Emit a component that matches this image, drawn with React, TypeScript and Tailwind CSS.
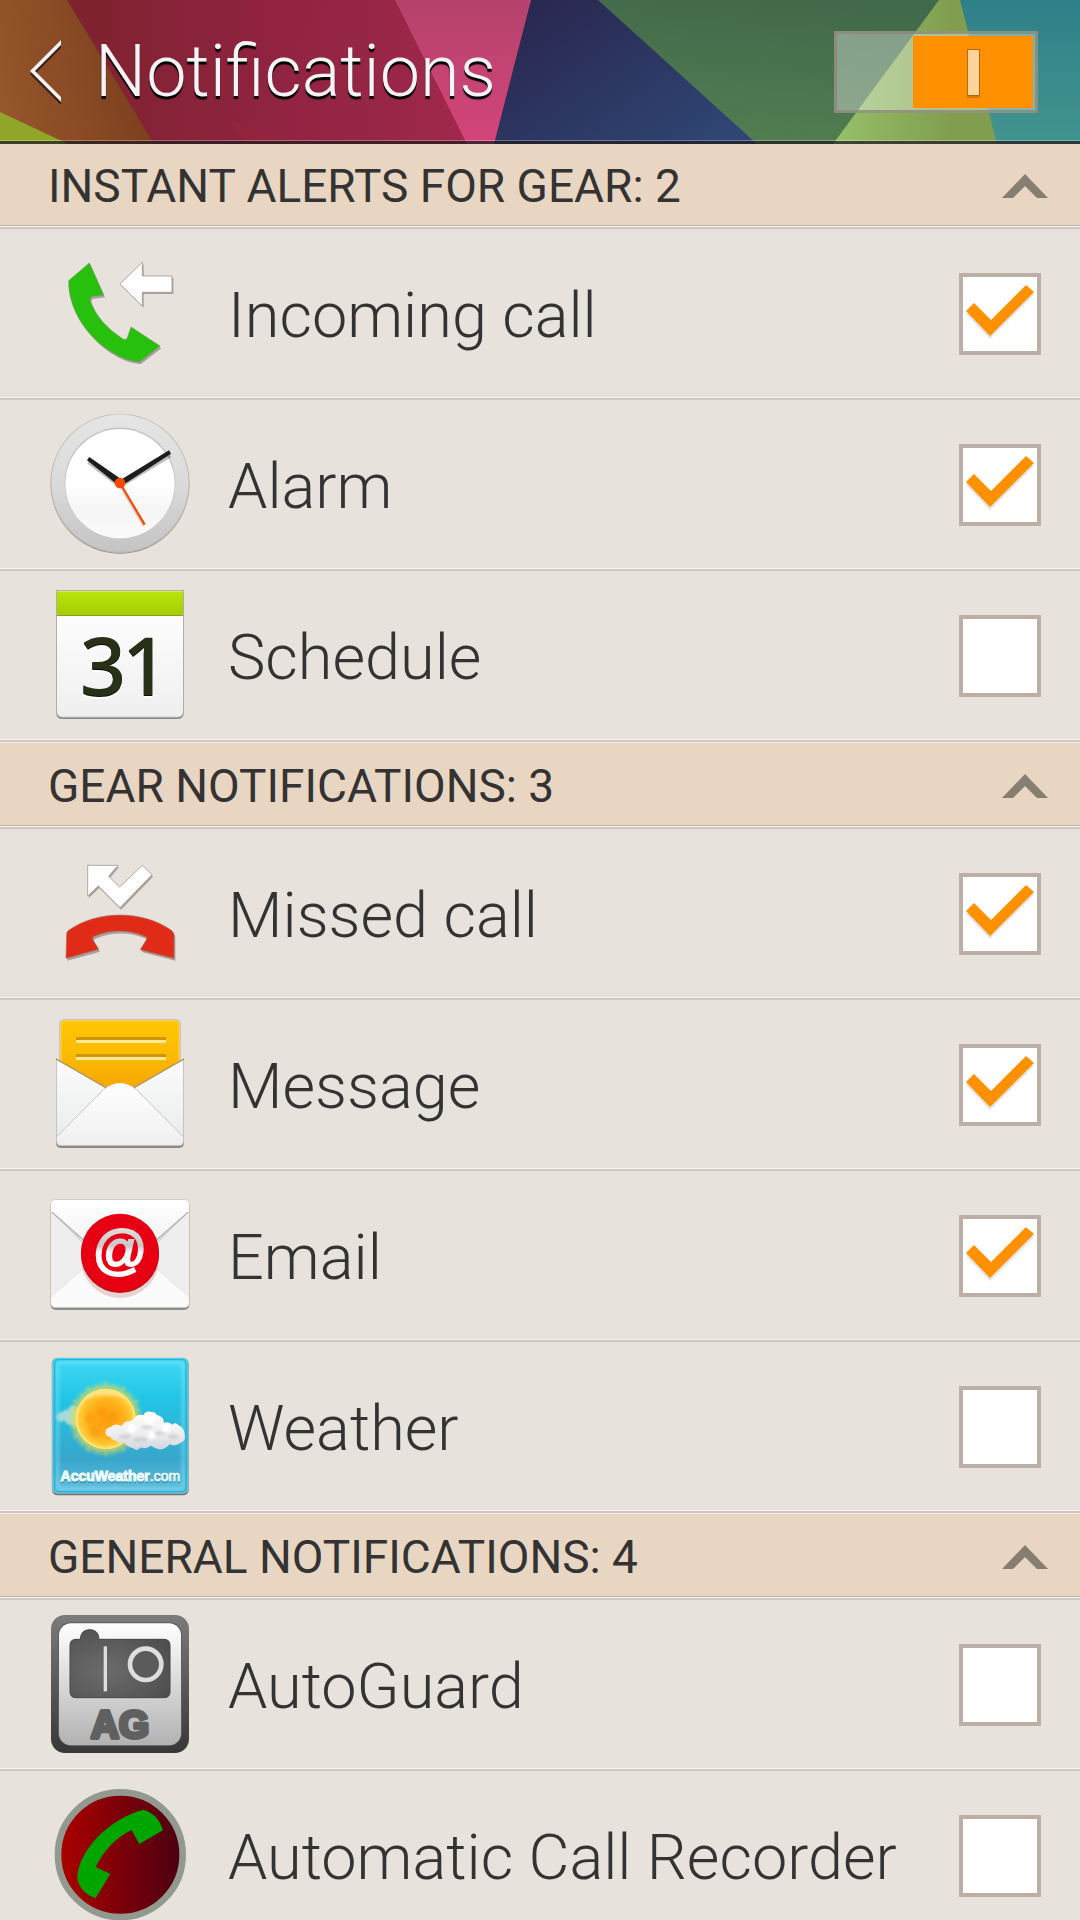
import { useState, type ReactNode } from "react";

function IconFrame({ top, children }: { top: number; children: ReactNode }) {
  return (
    <svg viewBox={`54 ${top} 432 432`} className="size-36 shrink-0 overflow-visible" aria-hidden="true">
      {children}
    </svg>
  );
}

function IncomingCallIcon() {
  const handset =
    "M116 122 L178 69 L221 165 L186 169 Q178 172 181 184 Q205 250 279 297 Q290 302 293 291 L303 261 L390 318 L329 365 C255 365 115 262 116 122Z";
  const arrow = "M270 132 L337 67 V108 H426 V157 H337 V198Z";
  return (
    <IconFrame top={6}>
      <path d={handset} fill="#8b857f" opacity="0.7" transform="translate(4 7)" />
      <path d={arrow} fill="#8b857f" opacity="0.7" transform="translate(4 5)" />
      <path d={handset} fill="#27c00c" stroke="#6f9a63" strokeWidth="2" />
      <path d={arrow} fill="#fff" stroke="#a09a94" strokeWidth="2.5" />
    </IconFrame>
  );
}

function AlarmIcon() {
  return (
    <IconFrame top={39}>
      <defs>
        <linearGradient id="alarmRim" x1="0" y1="0" x2="0" y2="1">
          <stop offset="0" stopColor="#e5e5e5" />
          <stop offset="0.5" stopColor="#dadada" />
          <stop offset="1" stopColor="#c4c4c4" />
        </linearGradient>
        <linearGradient id="alarmFace" x1="0" y1="0" x2="0" y2="1">
          <stop offset="0.5" stopColor="#fff" />
          <stop offset="0.75" stopColor="#f5f5f5" />
          <stop offset="1" stopColor="#fbfbfb" />
        </linearGradient>
      </defs>
      <circle cx="270" cy="253" r="208" fill="#858585" />
      <circle cx="270" cy="250" r="209" fill="#bcb8b4" />
      <circle cx="270" cy="249" r="206" fill="url(#alarmRim)" />
      <circle cx="270" cy="249" r="166" fill="#bdbdbd" />
      <circle cx="270" cy="251" r="164" fill="url(#alarmFace)" />
      <g opacity="0.25" stroke="#000" transform="translate(0 9)">
        <path d="M175 177 L270 249 L421 157" fill="none" strokeWidth="12" />
      </g>
      <path d="M178 171 L171 181 L259 251 L276 239Z" fill="#1d1d1d" />
      <path d="M417 151 L423 161 L280 254 L270 241Z" fill="#1d1d1d" />
      <path d="M270 249 L344 374" stroke="#a9a09a" strokeWidth="6" opacity="0.5" transform="translate(-3 4)" />
      <path d="M270 249 L344 374" stroke="#ff4500" strokeWidth="6.5" />
      <circle cx="270" cy="249" r="16" fill="#ff4500" />
    </IconFrame>
  );
}

function ScheduleIcon() {
  return (
    <IconFrame top={42}>
      <defs>
        <linearGradient id="calBar" x1="0" y1="0" x2="0" y2="1">
          <stop offset="0" stopColor="#b9e50a" />
          <stop offset="1" stopColor="#a3cd05" />
        </linearGradient>
        <linearGradient id="calPage" x1="0" y1="0" x2="0" y2="1">
          <stop offset="0" stopColor="#fdfdfd" />
          <stop offset="1" stopColor="#efefef" />
        </linearGradient>
      </defs>
      <path d="M79 60 H461 V428 Q461 447 442 447 H98 Q79 447 79 428Z" fill="#8a8a8a" />
      <path d="M79 60 H461 V424 Q461 443 442 443 H98 Q79 443 79 424Z" fill="#b4b0ac" />
      <path d="M81 136 H459 V422 Q459 440 442 440 H98 Q81 440 81 422Z" fill="url(#calPage)" />
      <rect x="81" y="63" width="378" height="74" fill="url(#calBar)" />
      <rect x="81" y="63" width="378" height="3" fill="#cdf04a" />
      <rect x="81" y="135" width="378" height="3" fill="#83a60d" />
      <g fontFamily="'Noto Sans', sans-serif" fontWeight="500" fontSize="242" textAnchor="middle">
        <text y="384" fill="#fff"><tspan x="219">3</tspan><tspan x="346">1</tspan></text>
        <text y="379" fill="#0c0f04"><tspan x="219">3</tspan><tspan x="346">1</tspan></text>
        <text y="374" fill="#293018"><tspan x="219">3</tspan><tspan x="346">1</tspan></text>
      </g>
    </IconFrame>
  );
}

function MissedCallIcon() {
  const arrow = "M173 76 H264 L236 109 L269 141 L337 76 L366 104 L270 203 L205 138 L173 168Z";
  const phone =
    "M110 282 Q109 277 116 271 C203 210 337 210 424 271 Q431 277 432 284 V355 L331 329 L350 298 Q352 291 344 289 C297 268 240 268 193 289 Q185 292 189 300 L206 328 L108 355Z";
  return (
    <IconFrame top={6}>
      <path d={arrow} fill="#8b857f" opacity="0.7" transform="translate(3 6)" />
      <path d={phone} fill="#8b857f" opacity="0.7" transform="translate(4 7)" />
      <path d={arrow} fill="#fff" stroke="#a09a94" strokeWidth="2.5" />
      <path d={phone} fill="#e02c16" stroke="#a8685e" strokeWidth="2" />
    </IconFrame>
  );
}

function MessageIcon() {
  return (
    <IconFrame top={39}>
      <defs>
        <linearGradient id="msgPaper" x1="0" y1="0" x2="0" y2="1">
          <stop offset="0" stopColor="#ffc704" />
          <stop offset="0.5" stopColor="#fbb903" />
          <stop offset="1" stopColor="#f6a402" />
        </linearGradient>
        <linearGradient id="msgSide" x1="0" y1="0" x2="0" y2="1">
          <stop offset="0" stopColor="#fbfbfb" />
          <stop offset="1" stopColor="#e9ebeb" />
        </linearGradient>
        <linearGradient id="msgFront" x1="0" y1="0" x2="0" y2="1">
          <stop offset="0" stopColor="#fff" />
          <stop offset="1" stopColor="#efefef" />
        </linearGradient>
      </defs>
      <rect x="88" y="58" width="364" height="260" rx="14" fill="#c3b9a8" />
      <rect x="91" y="61" width="358" height="260" rx="12" fill="#ffdb55" />
      <rect x="94" y="64" width="352" height="215" rx="8" fill="url(#msgPaper)" />
      <path d="M138 111 H408 V120 H138Z M138 162 H408 V171 H138Z" fill="#cd9706" />
      <path d="M138 120 H408 V129 H138Z M138 171 H408 V180 H138Z" fill="#ffe898" />
      <path d="M78 175 L228 261 L270 290 L312 261 L462 175 V428 Q462 444 446 444 H94 Q78 444 78 428Z" fill="#8b8b8b" />
      <path d="M78 175 L228 261 L270 290 L312 261 L462 175 V422 Q462 438 446 438 H94 Q78 438 78 422Z" fill="#c4c4c4" />
      <path d="M81 181 L226 265 L270 292 L314 265 L459 181 V422 Q459 435 446 435 H94 Q81 435 81 422Z" fill="url(#msgSide)" />
      <path d="M82 410 L220 270 Q270 228 320 270 L458 410 V422 Q458 435 446 435 H94 Q82 435 82 422Z" fill="url(#msgFront)" />
      <path d="M81 409 L220 269 Q230 260 238 257 M302 257 Q311 260 320 269 L459 409" fill="none" stroke="#c6c6c6" strokeWidth="3" />
      <path d="M78 177 L228 263 M312 263 L462 177" stroke="#b98a2a" strokeWidth="3" />
    </IconFrame>
  );
}

function EmailIcon() {
  return (
    <IconFrame top={42}>
      <defs>
        <linearGradient id="mailFlap" x1="0" y1="0" x2="0" y2="1">
          <stop offset="0" stopColor="#fff" />
          <stop offset="1" stopColor="#ececec" />
        </linearGradient>
        <linearGradient id="mailAt" x1="0" y1="0" x2="0" y2="1">
          <stop offset="0.1" stopColor="#e2e2e2" />
          <stop offset="0.45" stopColor="#c9c9c9" />
          <stop offset="0.55" stopColor="#f7f7f7" />
          <stop offset="1" stopColor="#fff" />
        </linearGradient>
        <clipPath id="mailBody">
          <rect x="63" y="90" width="414" height="321" rx="14" />
        </clipPath>
      </defs>
      <rect x="62" y="94" width="416" height="326" rx="16" fill="#8e8e8e" />
      <rect x="61" y="88" width="418" height="326" rx="16" fill="#c5c1bd" />
      <g clipPath="url(#mailBody)">
        <rect x="60" y="88" width="420" height="330" fill="#eee" />
        <path d="M60 384 L270 200 L480 384 V420 H60Z" fill="#fbfbfb" stroke="#dedede" strokeWidth="2" />
        <path d="M66 126 L160 218 H380 L474 126 L380 222 H160Z" fill="#c8c8c8" />
        <path d="M60 88 H480 V122 L290 288 H250 L60 122Z" fill="url(#mailFlap)" />
        <path d="M66 127 L170 219 M474 127 L370 219" stroke="#b0b0b0" strokeWidth="4" />
      </g>
      <circle cx="270" cy="267" r="117" fill="#a8443f" opacity="0.22" />
      <circle cx="270" cy="252" r="117" fill="#ad1710" />
      <circle cx="270" cy="248" r="117" fill="#e60012" />
      <text x="270" y="294" textAnchor="middle" fontFamily="'Liberation Sans', sans-serif" fontSize="162" stroke="url(#mailAt)" strokeWidth="6" fill="url(#mailAt)">
        @
      </text>
    </IconFrame>
  );
}

function WeatherIcon() {
  const rays = Array.from({ length: 48 }, (_, i) => {
    const a = (i / 48) * Math.PI * 2;
    const r = i % 4 === 0 ? 110 : i % 2 === 0 ? 102 : 97;
    return `M${227 + 88 * Math.cos(a)} ${237 + 88 * Math.sin(a)} L${227 + r * Math.cos(a)} ${237 + r * Math.sin(a)}`;
  }).join(" ");
  return (
    <IconFrame top={45}>
      <defs>
        <linearGradient id="sky" x1="0" y1="0" x2="0" y2="1">
          <stop offset="0" stopColor="#3fd9f5" />
          <stop offset="0.3" stopColor="#22c4e6" />
          <stop offset="0.75" stopColor="#38a6cb" />
          <stop offset="1" stopColor="#66bfdd" />
        </linearGradient>
        <radialGradient id="sun">
          <stop offset="0" stopColor="#ff9d0a" />
          <stop offset="0.6" stopColor="#ffb019" />
          <stop offset="0.88" stopColor="#ffcb38" />
          <stop offset="1" stopColor="#ffed85" />
        </radialGradient>
        <radialGradient id="sunGlow">
          <stop offset="0.65" stopColor="#ffdc3e" stopOpacity="0.95" />
          <stop offset="1" stopColor="#b9e07a" stopOpacity="0" />
        </radialGradient>
        <linearGradient id="cloud" x1="0" y1="0" x2="0" y2="1">
          <stop offset="0" stopColor="#fff" />
          <stop offset="0.6" stopColor="#ececef" />
          <stop offset="1" stopColor="#cfd6dc" />
        </linearGradient>
        <filter id="weatherSoft" x="-20%" y="-20%" width="140%" height="140%">
          <feGaussianBlur stdDeviation="5" />
        </filter>
        <filter id="puffSoft" x="-20%" y="-20%" width="140%" height="140%">
          <feGaussianBlur stdDeviation="2.5" />
        </filter>
      </defs>
      <rect x="66" y="56" width="410" height="410" rx="17" fill="#786f70" />
      <rect x="65" y="53" width="411" height="408" rx="17" fill="#83bdca" />
      <rect x="70" y="55" width="402" height="404" rx="14" fill="url(#sky)" />
      <rect x="82" y="67" width="378" height="380" rx="12" fill="none" stroke="#8fe9f6" strokeWidth="12" opacity="0.4" filter="url(#weatherSoft)" />
      <rect x="74" y="59" width="394" height="396" rx="11" fill="none" stroke="#1db8e2" strokeWidth="4" />
      <g fill="#a6dbd9" filter="url(#puffSoft)">
        <circle cx="93" cy="231" r="14" />
        <circle cx="110" cy="224" r="15" />
        <circle cx="130" cy="212" r="16" />
        <circle cx="118" cy="240" r="14" />
        <circle cx="137" cy="238" r="22" />
      </g>
      <circle cx="227" cy="237" r="116" fill="url(#sunGlow)" />
      <path d={rays} stroke="#f8d64a" strokeWidth="5" strokeLinecap="round" opacity="0.6" filter="url(#puffSoft)" />
      <circle cx="227" cy="237" r="90" fill="url(#sun)" />
      <path d="M157 182 Q227 118 297 182 Q227 150 157 182Z" fill="#ffefb0" opacity="0.6" filter="url(#puffSoft)" />
      <g fill="#f38f07" opacity="0.35" filter="url(#puffSoft)">
        <circle cx="180" cy="235" r="16" />
        <circle cx="215" cy="215" r="14" />
        <circle cx="250" cy="230" r="17" />
        <circle cx="195" cy="275" r="18" />
      </g>
      <path
        d="M226 279 Q226 262 244 260 Q255 248 275 258 Q281 243 300 244 Q312 238 318 229 Q330 222 340 226 Q347 211 364 216 Q375 214 381 225 Q401 228 402 249 Q416 242 427 254 Q435 245 446 256 Q464 265 464 285 Q469 302 451 309 Q435 321 419 313 Q405 330 386 328 Q373 323 362 317 Q346 329 333 322 Q320 337 310 325 Q287 319 283 306 Q266 312 259 302 Q244 301 242 291 Q229 291 226 279Z"
        fill="url(#cloud)"
      />
      <g fill="#c0c4ca" opacity="0.55" filter="url(#puffSoft)">
        <ellipse cx="285" cy="290" rx="18" ry="8" />
        <ellipse cx="330" cy="298" rx="22" ry="8" />
        <ellipse cx="385" cy="280" rx="20" ry="7" />
        <ellipse cx="430" cy="290" rx="16" ry="8" />
        <ellipse cx="350" cy="262" rx="16" ry="6" />
      </g>
      <g fill="#fff" opacity="0.9" filter="url(#puffSoft)">
        <circle cx="305" cy="265" r="14" />
        <circle cx="358" cy="238" r="16" />
        <circle cx="407" cy="264" r="13" />
        <circle cx="365" cy="285" r="12" />
      </g>
      <text x="272" y="428" textAnchor="middle" fontFamily="'Liberation Sans', sans-serif" fontSize="42" fill="#1b6f92" opacity="0.6">
        <tspan fontWeight="700">AccuWeather</tspan>.com
      </text>
      <text x="271" y="423" textAnchor="middle" fontFamily="'Liberation Sans', sans-serif" fontSize="42" fill="#edfbff" stroke="#edfbff" strokeWidth="2">
        <tspan fontWeight="700" strokeWidth="3">AccuWeather</tspan>.com
      </text>
    </IconFrame>
  );
}

function AutoGuardIcon() {
  return (
    <IconFrame top={69}>
      <defs>
        <linearGradient id="agRim" x1="0" y1="0" x2="0" y2="1">
          <stop offset="0" stopColor="#7b7b7b" />
          <stop offset="1" stopColor="#373737" />
        </linearGradient>
        <linearGradient id="agPlate" x1="0" y1="0" x2="0" y2="1">
          <stop offset="0" stopColor="#fff" />
          <stop offset="1" stopColor="#b2b2b2" />
        </linearGradient>
        <radialGradient id="agCam" cx="0.35" cy="0.6" r="0.75">
          <stop offset="0" stopColor="#6c6c6c" />
          <stop offset="1" stopColor="#4e4e4e" />
        </radialGradient>
      </defs>
      <rect x="63" y="75" width="414" height="414" rx="42" fill="url(#agRim)" />
      <rect x="84" y="97" width="372" height="370" rx="38" fill="#5d5d5d" />
      <rect x="87" y="100" width="366" height="366" rx="36" fill="url(#agPlate)" />
      <path
        d="M138 148 H151 Q152 119 179 119 Q206 119 207 148 H402 Q420 148 420 166 V305 Q420 323 402 323 H138 Q120 323 120 305 V166 Q120 148 138 148Z"
        fill="url(#agCam)"
        stroke="#444"
        strokeWidth="3"
      />
      <rect x="221" y="169" width="10" height="135" fill="#dedede" />
      <circle cx="347" cy="223" r="47" fill="#5b5b5b" stroke="#dedede" strokeWidth="14" />
      <text x="270" y="444" textAnchor="middle" fontFamily="'Liberation Sans', sans-serif" fontWeight="700" fontSize="116" fill="#606060" stroke="#606060" strokeWidth="12" strokeLinejoin="round">
        AG
      </text>
    </IconFrame>
  );
}

function CallRecorderIcon() {
  return (
    <IconFrame top={72}>
      <defs>
        <linearGradient id="recDisc" x1="0" y1="0" x2="1" y2="0">
          <stop offset="0" stopColor="#ad0000" />
          <stop offset="0.5" stopColor="#7c0008" />
          <stop offset="1" stopColor="#4a0012" />
        </linearGradient>
      </defs>
      <circle cx="271" cy="284" r="187" fill="url(#recDisc)" stroke="#929a90" strokeWidth="20" />
      <path
        d="M340 149 Q383 160 399 211 L328 252 L305 210 Q236 243 197 321 L241 342 L197 414 Q153 401 142 357 C142 277 231 178 340 149Z"
        fill="#00a600"
      />
    </IconFrame>
  );
}

type Item = { name: string; checked: boolean; icon: ReactNode };
type Group = { title: string; others: number; items: Item[] };

const initialGroups: Group[] = [
  {
    title: "INSTANT ALERTS FOR GEAR",
    others: 0,
    items: [
      { name: "Incoming call", checked: true, icon: <IncomingCallIcon /> },
      { name: "Alarm", checked: true, icon: <AlarmIcon /> },
      { name: "Schedule", checked: false, icon: <ScheduleIcon /> },
    ],
  },
  {
    title: "GEAR NOTIFICATIONS",
    others: 0,
    items: [
      { name: "Missed call", checked: true, icon: <MissedCallIcon /> },
      { name: "Message", checked: true, icon: <MessageIcon /> },
      { name: "Email", checked: true, icon: <EmailIcon /> },
      { name: "Weather", checked: false, icon: <WeatherIcon /> },
    ],
  },
  {
    title: "GENERAL NOTIFICATIONS",
    others: 4,
    items: [
      { name: "AutoGuard", checked: false, icon: <AutoGuardIcon /> },
      { name: "Automatic Call Recorder", checked: false, icon: <CallRecorderIcon /> },
    ],
  },
];

function HeaderArt() {
  return (
    <svg viewBox="0 0 1080 144" preserveAspectRatio="none" className="absolute inset-0 h-full w-full" aria-hidden="true">
      <defs>
        <linearGradient id="hBrown" x1="0" y1="0.6" x2="1" y2="0.4">
          <stop offset="0" stopColor="#95562c" />
          <stop offset="1" stopColor="#7a3b1c" />
        </linearGradient>
        <linearGradient id="hRed">
          <stop offset="0" stopColor="#7e222e" />
          <stop offset="0.5" stopColor="#8f2440" />
          <stop offset="1" stopColor="#a0284c" />
        </linearGradient>
        <linearGradient id="hPink" x1="0" y1="0" x2="0" y2="1">
          <stop offset="0" stopColor="#b5426c" />
          <stop offset="1" stopColor="#d3457a" />
        </linearGradient>
        <linearGradient id="hNavy" x1="0" y1="0" x2="1" y2="0.8">
          <stop offset="0" stopColor="#29244c" />
          <stop offset="1" stopColor="#2f4674" />
        </linearGradient>
        <linearGradient id="hGreen" x1="0.6" y1="0" x2="0.4" y2="1">
          <stop offset="0" stopColor="#41694b" />
          <stop offset="1" stopColor="#527e51" />
        </linearGradient>
        <linearGradient id="hLime">
          <stop offset="0" stopColor="#96c069" />
          <stop offset="0.7" stopColor="#819e50" />
        </linearGradient>
        <linearGradient id="hTeal" x1="0" y1="0" x2="0" y2="1">
          <stop offset="0" stopColor="#2f8088" />
          <stop offset="1" stopColor="#42948f" />
        </linearGradient>
      </defs>
      <path d="M0 0H160V144H0Z" fill="url(#hBrown)" />
      <path d="M0 112L68 144H0Z" fill="#8fa628" />
      <path d="M67 0H400L470 144H154Z" fill="url(#hRed)" />
      <path d="M244 0H330L228 119Z" fill="#962440" opacity="0.2" />
      <path d="M228 119L300 144H246Z" fill="#a1243a" opacity="0.35" />
      <path d="M395 0H533L496 144H467Z" fill="url(#hPink)" />
      <path d="M531 0H600L760 144H494Z" fill="url(#hNavy)" />
      <path d="M598 0H942L835 144H757Z" fill="url(#hGreen)" />
      <path d="M939 0H962L1000 144H833Z" fill="url(#hLime)" />
      <path d="M960 0H1080V144H997Z" fill="url(#hTeal)" />
    </svg>
  );
}

export default function App() {
  const [groups, setGroups] = useState(initialGroups);
  const [collapsed, setCollapsed] = useState<boolean[]>([false, false, false]);
  const [enabled, setEnabled] = useState(true);

  const toggleItem = (g: number, i: number) =>
    setGroups((all) =>
      all.map((group, gi) =>
        gi === g
          ? { ...group, items: group.items.map((item, ii) => (ii === i ? { ...item, checked: !item.checked } : item)) }
          : group,
      ),
    );

  return (
    <div className="h-screen overflow-hidden bg-[#e7e2dc] font-[Roboto,sans-serif] text-[#333]">
      <header className="relative flex items-center justify-between py-[31px] pr-[42px] pl-[30px]">
        <HeaderArt />
        <div className="absolute inset-x-0 bottom-0 border-t border-white/30">
          <div className="h-[3px] bg-[#211c20]/75" />
        </div>
        <div className="relative flex items-center">
          <button type="button" aria-label="Back" className="pr-[33px]">
            <svg viewBox="0 0 32 64" className="h-16 w-8" aria-hidden="true">
              <path d="M31 3V8L5 34L31 60V65L0 34Z" fill="#000" opacity="0.6" />
              <path d="M31 0V5L5 31L31 57V62L0 31Z" fill="#f5f3f5" />
            </svg>
          </button>
          <h1 className="text-[72px] leading-[82px] font-light text-[#f5f3f5] [text-shadow:0_3px_1px_#000]">Notifications</h1>
        </div>
        <label className="relative block h-[82px] w-[204px] border-[3px] border-[#8c8778]/80 bg-white/35 p-0.5">
          <input
            type="checkbox"
            role="switch"
            aria-label="Notifications"
            checked={enabled}
            onChange={() => setEnabled(!enabled)}
            className="peer sr-only"
          />
          <span className="flex h-full w-[120px] items-center justify-center bg-gray-500 peer-checked:ml-auto peer-checked:bg-[#ff9000]">
            <span className="h-[47px] w-[13px] border border-[#b96a07] bg-[#ffd49c] shadow-[0_2px_0_#d87a02]" />
          </span>
        </label>
      </header>

      <main>
        {groups.map((group, g) => (
          <section key={group.title}>
            <h2>
              <button
                type="button"
                aria-expanded={!collapsed[g]}
                onClick={() => setCollapsed(collapsed.map((c, i) => (i === g ? !c : c)))}
                className={
                  (g === 0 ? "pt-[15px]" : "border-t border-[#f3ebe2] pt-4") +
                  " flex w-full items-center justify-between border-b-2 border-b-[#cfc9c4] bg-[#e8d6c2] pr-8 pb-3.5 pl-12 text-left text-[46px] leading-[54px] shadow-[inset_0_-1px_0_#f6f2ee,inset_0_-2px_0_#c0b3a5]"
                }
              >
                {group.title}: {group.others + group.items.filter((item) => item.checked).length}
                <svg viewBox="0 0 46 24" className="h-6 w-[46px]" aria-hidden="true">
                  <path
                    d={collapsed[g] ? "M0 0L23 24L46 0H35L23 12L11 0Z" : "M0 24L23 0L46 24H35L23 12L11 24Z"}
                    fill="#877e72"
                  />
                </svg>
              </button>
            </h2>
            {!collapsed[g] && (
              <ul>
                {group.items.map((item, i) => (
                  <li key={item.name} className="border-b-2 border-[#cfc9c4] shadow-[inset_0_-1px_0_#f6f4f1]">
                    <label className="flex items-center pt-[13px] pr-[39px] pb-3 pl-12">
                      {item.icon}
                      <span className="ml-9 flex-1 pt-1 text-[63px] leading-[76px] font-light">{item.name}</span>
                      <span className="relative block size-[82px]">
                        <input
                          type="checkbox"
                          checked={item.checked}
                          onChange={() => toggleItem(g, i)}
                          className="peer block size-full appearance-none border-4 border-[#bcb0a6] bg-white"
                        />
                        <svg
                          viewBox="0 0 82 82"
                          className="pointer-events-none absolute inset-0 hidden size-full peer-checked:block"
                          aria-hidden="true"
                        >
                          <path d="M7 41L15 33L32 50L67 15L75 22L31 66Z" fill="#e3e3e3" />
                          <path d="M7 38L15 30L32 47L67 12L75 19L31 63Z" fill="#ff9000" />
                        </svg>
                      </span>
                    </label>
                  </li>
                ))}
              </ul>
            )}
          </section>
        ))}
      </main>
    </div>
  );
}
